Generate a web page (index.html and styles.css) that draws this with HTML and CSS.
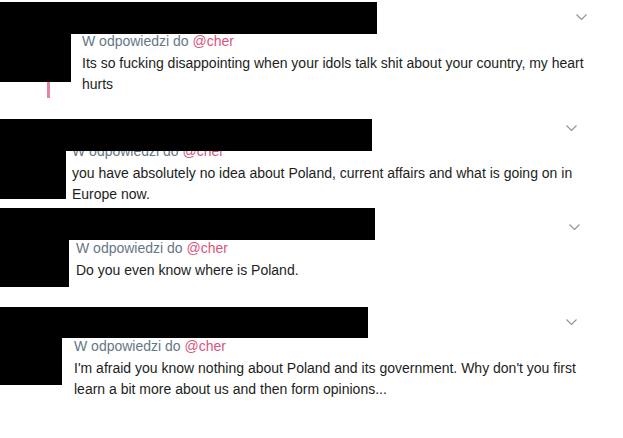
FILE: index.html
```html
<!DOCTYPE html>
<html lang="pl">
<head>
<meta charset="utf-8">
<title>Odpowiedzi</title>
<link rel="stylesheet" href="styles.css">
</head>
<body>
<main class="feed">
  <article class="tweet t1">
    <div class="head">
      <div class="bar"></div>
      <svg class="chev" viewBox="0 0 11 6" width="11" height="6"><path d="M0.5 0.5 L5.5 5.5 L10.5 0.5" /></svg>
    </div>
    <div class="body">
      <div class="side">
        <div class="av"></div>
        <div class="thread"></div>
      </div>
      <div class="content">
        <div class="reply">W odpowiedzi do <span class="mention">@cher</span></div>
        <p class="text">Its so fucking disappointing when your idols talk shit about your country, my heart hurts</p>
      </div>
    </div>
  </article>

  <article class="tweet t2">
    <div class="head">
      <div class="bar"></div>
      <svg class="chev" viewBox="0 0 11 6" width="11" height="6"><path d="M0.5 0.5 L5.5 5.5 L10.5 0.5" /></svg>
    </div>
    <div class="body">
      <div class="side">
        <div class="av"></div>
      </div>
      <div class="content">
        <div class="reply">W odpowiedzi do <span class="mention">@cher</span></div>
        <p class="text">you have absolutely no idea about Poland, current affairs and what is going on in Europe now.</p>
      </div>
    </div>
  </article>

  <article class="tweet t3">
    <div class="head">
      <div class="bar"></div>
      <svg class="chev" viewBox="0 0 11 6" width="11" height="6"><path d="M0.5 0.5 L5.5 5.5 L10.5 0.5" /></svg>
    </div>
    <div class="body">
      <div class="side">
        <div class="av"></div>
      </div>
      <div class="content">
        <div class="reply">W odpowiedzi do <span class="mention">@cher</span></div>
        <p class="text">Do you even know where is Poland.</p>
      </div>
    </div>
  </article>

  <article class="tweet t4">
    <div class="head">
      <div class="bar"></div>
      <svg class="chev" viewBox="0 0 11 6" width="11" height="6"><path d="M0.5 0.5 L5.5 5.5 L10.5 0.5" /></svg>
    </div>
    <div class="body">
      <div class="side">
        <div class="av"></div>
      </div>
      <div class="content">
        <div class="reply">W odpowiedzi do <span class="mention">@cher</span></div>
        <p class="text">I'm afraid you know nothing about Poland and its government. Why don't you first learn a bit more about us and then form opinions...</p>
      </div>
    </div>
  </article>
</main>
</body>
</html>
```
FILE: styles.css
```css
html, body {
  margin: 0;
  padding: 0;
  background: #ffffff;
}

body {
  font-family: "Liberation Sans", Arial, Helvetica, sans-serif;
  font-size: 14px;
  color: #14171a;
}

.feed {
  display: flex;
  flex-direction: column;
}

.tweet {
  display: flex;
  flex-direction: column;
  margin-top: var(--top);
}

.head {
  display: flex;
  align-items: flex-start;
  height: var(--head-h, 32px);
  position: relative;
  z-index: 1;
}

.bar {
  width: var(--bar);
  height: 100%;
  background: #000;
}

.chev {
  margin-left: auto;
  margin-top: var(--chev-top);
  margin-right: var(--chev-right);
  fill: none;
  stroke: #8b98a4;
  stroke-width: 1.2;
}

.body {
  display: flex;
  align-items: flex-start;
  gap: var(--gap);
}

.side {
  display: flex;
  flex-direction: column;
  flex: none;
  width: var(--av);
}

.av {
  height: var(--avh);
  background: #000;
}

.thread {
  width: 3px;
  height: 16px;
  margin-left: 47px;
  background: #e0889d;
}

.content {
  width: 515px;
  margin-top: var(--shift);
}

.reply {
  color: #657786;
  line-height: 20px;
  margin-bottom: 2px;
}

.mention {
  color: #d9557a;
}

.text {
  margin: 0;
  line-height: 21px;
  color: #1c1e21;
}

.t1 { --top: 2px;  --bar: 377px; --av: 71px; --avh: 48px; --gap: 11px; --shift: -3px;  --chev-top: 12px; --chev-right: 36px; }
.t2 { --top: 21px; --bar: 372px; --av: 66px; --avh: 48px; --gap: 6px;  --shift: -10px; --chev-top: 6px;  --chev-right: 46px; }
.t3 { --top: 3px;  --bar: 375px; --av: 69px; --avh: 47px; --gap: 7px;  --shift: -2px;  --chev-top: 16px; --chev-right: 43px; }
.t4 { --top: 20px; --bar: 368px; --av: 62px; --avh: 47px; --gap: 12px; --shift: -2px;  --chev-top: 12px; --chev-right: 46px; --head-h: 31px; }
```
